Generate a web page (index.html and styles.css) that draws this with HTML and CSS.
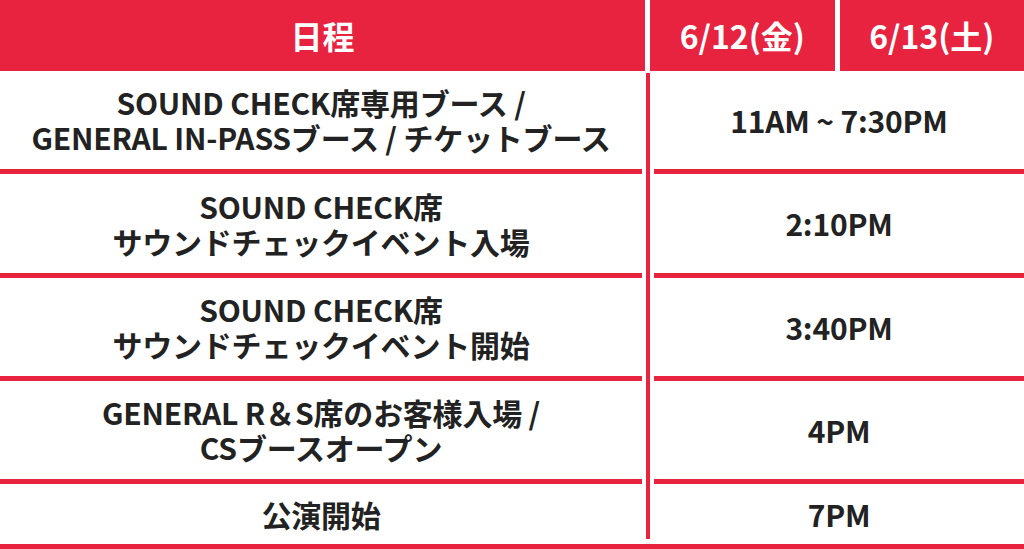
FILE: index.html
```html
<!DOCTYPE html>
<html lang="ja">
<head>
<meta charset="utf-8">
<link rel="stylesheet" href="styles.css">
</head>
<body>
<div class="schedule">
  <div class="head">
    <div class="hcell">日程</div>
    <div class="hcell">6/12(金)</div>
    <div class="hcell">6/13(土)</div>
  </div>
  <div class="body">
    <div class="vline"></div>
    <div class="cell left r1">SOUND CHECK席専用ブース /<br>GENERAL IN-PASSブース / チケットブース</div>
    <div class="cell right r1">11AM ~ 7:30PM</div>
    <div class="cell left r2">SOUND CHECK席<br>サウンドチェックイベント入場</div>
    <div class="cell right r2">2:10PM</div>
    <div class="cell left r3">SOUND CHECK席<br>サウンドチェックイベント開始</div>
    <div class="cell right r3">3:40PM</div>
    <div class="cell left r4">GENERAL R＆S席のお客様入場 /<br>CSブースオープン</div>
    <div class="cell right r4">4PM</div>
    <div class="cell left r5 last">公演開始</div>
    <div class="cell right r5 last">7PM</div>
  </div>
</div>
</body>
</html>
```
FILE: styles.css
```css
html, body {
  margin: 0;
  padding: 0;
  background: #ffffff;
}
body {
  font-family: "Noto Sans CJK JP", "Noto Sans", sans-serif;
  font-weight: 700;
  color: #222222;
}
.schedule {
  width: 1024px;
  height: 549px;
  overflow: hidden;
}
.head {
  display: grid;
  grid-template-columns: 645px 1fr 1fr;
  column-gap: 5px;
  height: 71px;
}
.hcell {
  background: #e8233f;
  color: #ffffff;
  font-size: 32px;
  line-height: 40px;
  display: flex;
  align-items: center;
  justify-content: center;
  padding-bottom: 1px;
}
.body {
  display: grid;
  grid-template-columns: 642px 12px 1fr;
  grid-template-rows: 103px 104px 103px 103px 60px;
  border-bottom: 5px solid #e8233f;
}
.vline {
  grid-column: 2;
  grid-row: 1 / -1;
  width: 4px;
  justify-self: center;
  background: #e8233f;
  margin-top: 2px;
  margin-bottom: 5px;
}
.cell {
  border-bottom: 5px solid #e8233f;
  display: flex;
  align-items: center;
  justify-content: center;
  text-align: center;
  font-size: 30px;
  line-height: 35px;
  letter-spacing: -0.2px;
}
.cell.last {
  border-bottom: 0;
}
.left { grid-column: 1; }
.right { grid-column: 3; }
.r1 { grid-row: 1; }
.r2 { grid-row: 2; }
.r3 { grid-row: 3; }
.r4 { grid-row: 4; }
.r5 { grid-row: 5; }
```
